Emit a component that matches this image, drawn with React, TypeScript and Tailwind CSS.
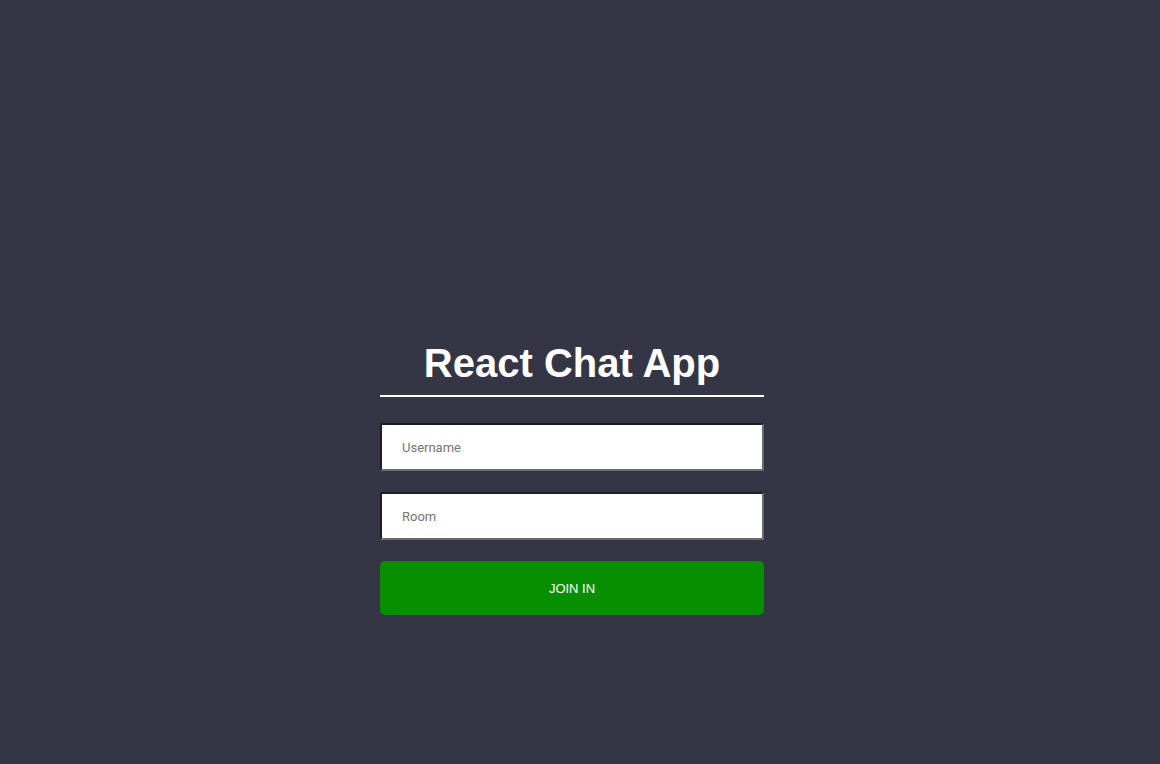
import React, { useState } from 'react';

export default function App() {
  const [username, setUsername] = useState('');
  const [room, setRoom] = useState('');

  return (
    <div className="min-h-screen w-full bg-[#343645] pt-[339px] font-['Liberation_Sans',Arial,sans-serif]">
      <div className="flex justify-center pr-[16px]">
        <div className="w-[384px]">
          <h1 className="border-b-2 border-white pb-[8px] text-center text-[40px] font-bold leading-[48px] text-white">
            React Chat App
          </h1>
          <div className="mt-[26px] flex flex-col gap-[21px] font-['Roboto',Arial,sans-serif]">
            <input
              type="text"
              placeholder="Username"
              value={username}
              onChange={(e) => setUsername(e.target.value)}
              className="h-[48px] w-full border-2 border-t-[#1e1e24] border-l-[#1e1e24] border-r-[#6b6b70] border-b-[#6b6b70] bg-white px-[20px] text-[13px] text-black outline-none placeholder:text-[#757575]"
            />
            <input
              type="text"
              placeholder="Room"
              value={room}
              onChange={(e) => setRoom(e.target.value)}
              className="h-[48px] w-full border-2 border-t-[#1e1e24] border-l-[#1e1e24] border-r-[#6b6b70] border-b-[#6b6b70] bg-white px-[20px] text-[13px] text-black outline-none placeholder:text-[#757575]"
            />
            <button className="h-[54px] w-full rounded-[5px] bg-[#078f00] pt-[2px] font-['Liberation_Sans',Arial,sans-serif] text-[13px] uppercase text-white">
              Join In
            </button>
          </div>
        </div>
      </div>
    </div>
  );
}
